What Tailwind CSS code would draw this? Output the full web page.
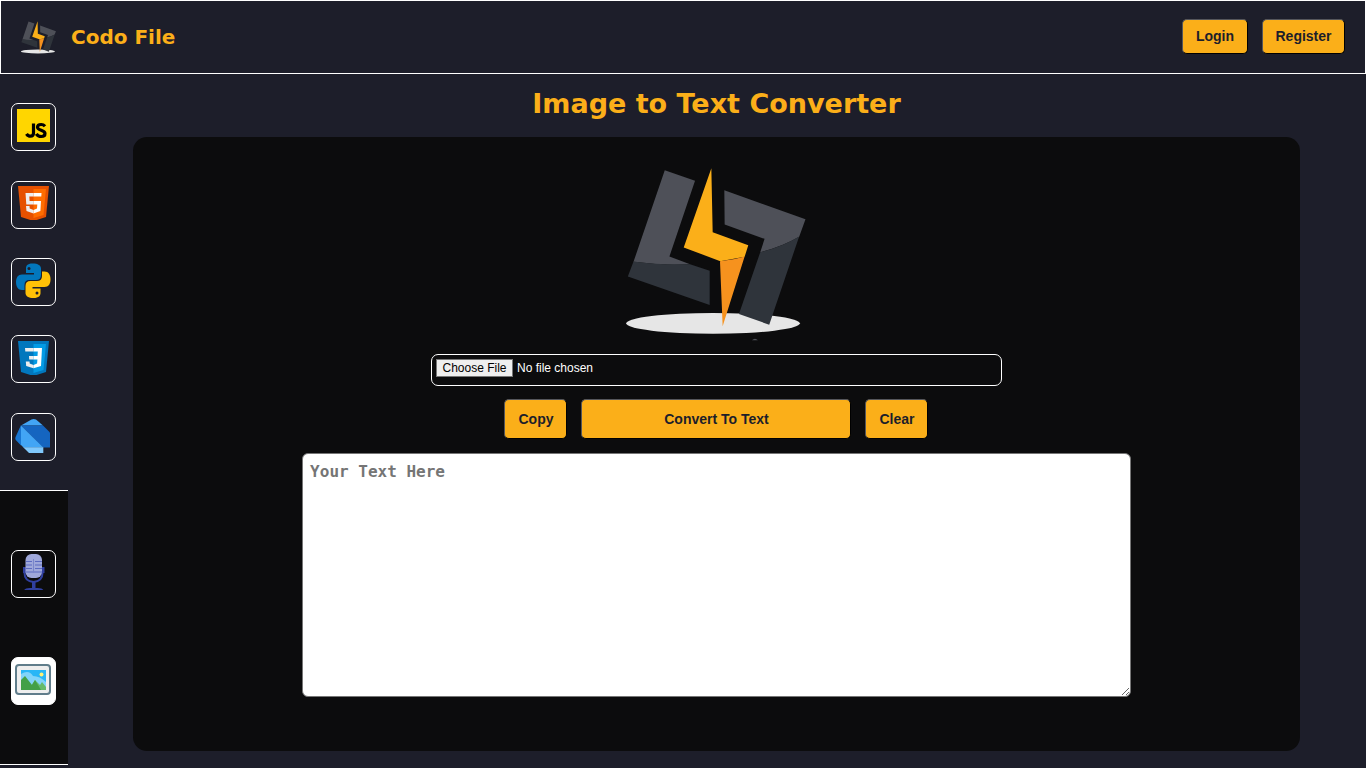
<!DOCTYPE html>
<html lang="en">
<head>
<meta charset="utf-8">
<meta name="viewport" content="width=device-width, initial-scale=1">
<title>Codo File - Image to Text Converter</title>
<script src="https://cdn.jsdelivr.net/npm/@tailwindcss/browser@4"></script>
</head>
<body class="flex min-h-screen flex-col bg-[#1d1e2a] font-['Liberation_Sans',Arial,sans-serif]">
<svg class="hidden" aria-hidden="true">
  <symbol id="logo" viewBox="48 54 540 520">
    <ellipse cx="309" cy="521" rx="261" ry="31" fill="#e6e6e6"/>
    <path fill="#4e5058" d="M164 61 255 92 178 320 240 343Q160 348 70 336Z"/>
    <path fill="#2f343b" d="M70 335Q150 346 240 343L299 363V466L53 380Z"/>
    <path fill="#4e5058" d="M343 121 587 208 568 261Q515 292 451 307L464 267 344 224Z"/>
    <path fill="#2f343b" d="M568 260 478 525 387 493 451 307Q515 292 568 260Z"/>
    <path fill="#fbaf19" d="M304 55 308 247 415 286 404 321 331 334 221 293Z"/>
    <path fill="#f6921e" d="M404 320 338 530 330 334Q370 331 404 320Z"/>
    <path fill="#4e5058" d="M426 572Q435 562 444 572Z"/>
  </symbol>
</svg>

<header class="flex h-[74px] shrink-0 items-center justify-between border border-white px-[20px]">
  <a href="#" class="flex items-center gap-[15px] font-['DejaVu_Sans',sans-serif] text-[20px] font-bold text-[#fbaf19]">
    <svg class="mt-[2px] h-[34px] w-[35px]" aria-hidden="true"><use href="#logo"/></svg>
    <span>Codo File</span>
  </a>
  <div class="flex gap-[14px] pb-[2px]">
    <button class="h-[35px] w-[66px] rounded-[5px] border border-t-[#55565b] border-l-[#55565b] border-r-black border-b-black bg-[#fbaf19] text-[14px] font-bold text-[#1d1e2a]">Login</button>
    <button class="h-[35px] w-[83px] rounded-[5px] border border-t-[#55565b] border-l-[#55565b] border-r-black border-b-black bg-[#fbaf19] text-[14px] font-bold text-[#1d1e2a]">Register</button>
  </div>
</header>

<div class="flex grow">
  <aside class="mb-[3px] flex w-[68px] shrink-0 flex-col">
    <nav aria-label="Languages" class="flex min-h-[417px] grow-[3] flex-col items-center justify-evenly border-b border-white pr-px">
      <a href="#" aria-label="JavaScript" class="flex h-[48px] w-[45px] rounded-[7px] border border-white pt-[3px] pl-[3px]">
        <svg class="size-[36px]" viewBox="0 0 36 36"><path fill="#ffd600" d="M2 2h33v33H2z"/><path fill="none" stroke="#000" stroke-width="3.200" d="M18.500 16.500v9.500q0 3.200-3 3.200-2.500 0-4-2.400M30 19.200Q28.500 17.500 26.200 17.500q-3.700 0-3.700 2.800c0 3.500 7.500 2.500 7.500 6.200q0 3-3.800 3-3.200 0-4.900-2.700"/></svg>
      </a>
      <a href="#" aria-label="HTML5" class="flex h-[48px] w-[45px] rounded-[7px] border border-white pt-[2px] pl-[3px]">
        <svg class="size-[36px]" viewBox="0 0 36 36"><path fill="#e65100" d="M3 2h31l-3 31-12.500 4L6 33z"/><path fill="#ff6d00" d="M18.500 5H31l-2.500 26-10 3z"/><path fill="#eee" d="M10.500 9h8v3.500h-4.200l.3 4.500h3.900v3.500h-7.200zM11 22h3.500l.2 2.500 3.800 1.500v3.500L11.500 27z"/><path fill="#fff" d="M18.500 9h8l-.2 3.500h-7.800zM18.500 17H26l-.6 10-6.900 2.500V26l3.500-1.500.3-4h-3.800z"/></svg>
      </a>
      <a href="#" aria-label="Python" class="flex h-[48px] w-[45px] rounded-[7px] border border-white pt-[3px] pl-[3px]">
        <svg class="size-[36px]" viewBox="0 0 36 36"><path fill="#0277bd" d="M17.500 1.500C12 1.500 11 4 11 6.500V11h8v1.500H7c-4 0-6 3-6 7.500s2 8 6 8h2.500V23q0-5 5-5H21q5 0 5-5V6.500c0-3-3-5-8.500-5z"/><path fill="#ffc107" d="M18.500 36c5.500 0 7-2.500 7-5v-4.500h-8V25h12c4 0 6-3 6-7.500s-2-8-6-8H27V14q0 5-5 5h-6.500q-5 0-5 5v7c0 3 3 5 8 5z"/><circle cx="14" cy="6.500" r="1.500" fill="#1d1e2a"/><circle cx="22" cy="31" r="1.500" fill="#1d1e2a"/></svg>
      </a>
      <a href="#" aria-label="CSS3" class="flex h-[48px] w-[45px] rounded-[7px] border border-white pt-[3px] pl-[3px]">
        <svg class="size-[36px]" viewBox="0 0 36 36"><path fill="#0277bd" d="M3 2h31l-3 31-12.500 4L6 33z"/><path fill="#039be5" d="M18.500 5H31l-2.500 26-10 3z"/><path fill="#eee" d="M10 9h8.500v3.500h-8.200zM14 17h4.500v3.500h-4.300zM10.800 22.500h3.700l.2 2 3.800 1.500v3.200L11.200 27z"/><path fill="#fff" d="M18.500 9H27l-1 18-7.500 2.200V26l3.600-1.500.3-4h-3.900V17h4l.3-4.500h-4.300z"/></svg>
      </a>
      <a href="#" aria-label="Dart" class="flex h-[48px] w-[45px] rounded-[7px] border border-white pt-[3px] pl-[3px]">
        <svg class="size-[36px]" viewBox="0 0 36 36"><path fill="#1976d2" d="M6 8v20.500L.8 23q-1-1.500 0-3.500z"/><path fill="#42a5f5" d="M6 8.500 16.500 2.500q2-1 4.500 0L28 8.500z"/><path fill="#1565c0" d="M6 8.500h22l7 7v15h-7z"/><path fill="#42a5f5" d="M6 8.500 28.300 30.500H8.500L6 28z"/><path fill="#80c8fc" d="M8.200 30.200h20.100v5.800H14z"/></svg>
      </a>
    </nav>
    <nav aria-label="Tools" class="flex min-h-[274px] grow-[2] flex-col items-center justify-evenly border-b border-white bg-[#0c0c0d] pr-px">
      <a href="#" aria-label="Speech to text" class="flex h-[48px] w-[45px] rounded-[7px] border border-white pt-[3px] pl-[3px]">
        <svg class="size-[36px]" viewBox="0 0 36 36"><path fill="none" stroke="#303f9f" stroke-width="2" d="M9.500 14v5q0 8 9 9 9-1 9-9v-5"/><path fill="#303f9f" d="M17 27h3.500v7H17zM9 37q0-3 6-3h7.500q6 0 6 3zM8 13h4v6H8zM25.500 13h4v6h-4z"/><rect x="10.500" y="0" width="16.500" height="24" rx="6" fill="#9fa8da"/><path stroke="#5c6bc0" stroke-width="1.200" d="M11 7.500h6m3 0h7M11 11h6m3 0h7M11 14.500h6m3 0h7M11 18h16"/><path stroke="#7986cb" d="M18.500 5v14"/></svg>
      </a>
      <a href="#" aria-label="Image to text" class="flex h-[48px] w-[45px] rounded-[7px] border border-white bg-white pt-[3px] pl-[3px]">
        <svg class="size-[36px]" viewBox="0 0 36 36"><rect x="1" y="4" width="34" height="29" rx="3" fill="#eee" stroke="#607d8b" stroke-width="2"/><path fill="#29b6f6" d="M6 9h25v20H6z"/><path fill="#81d4fa" d="M6 13q8-5 12 2 7 0 13 6v8H6z"/><circle cx="26.500" cy="13.500" r="2" fill="#fff176"/><path fill="#66bb6a" d="m14 28 6-9 5 5 2-3 4 5v3H14z"/><path fill="#43a047" d="M6 19l4-4 7 9 3-5 6 10H6z"/></svg>
      </a>
    </nav>
  </aside>

  <main class="flex grow flex-col items-center pt-[10px] pr-px pb-[17px]">
    <h1 class="mb-[13px] font-['DejaVu_Sans',sans-serif] text-[27px] leading-[40px] font-bold text-[#fbaf19]">Image to Text Converter</h1>
    <section class="flex w-9/10 grow flex-col items-center rounded-[14px] bg-[#0c0c0d] pt-[31px]">
      <svg class="h-[173px] w-[180px]" role="img" aria-label="Codo File logo"><use href="#logo"/></svg>
      <input type="file" aria-label="Choose an image" class="mt-[13px] h-[32px] w-[571px] max-w-full rounded-[7px] border border-white p-[4px] text-[12px] leading-[16px] text-white file:mr-[4px] file:h-[18px] file:w-[77px] file:rounded-none file:border file:border-solid file:border-[#767676] file:bg-[#efefef] file:p-0 file:font-normal file:text-black">
      <div class="mt-[13px] flex gap-[14px]">
        <button class="h-[40px] w-[63px] rounded-[5px] border border-t-[#55565b] border-l-[#55565b] border-r-black border-b-black bg-[#fbaf19] text-[14px] font-bold text-[#1d1e2a]">Copy</button>
        <button class="h-[40px] w-[270px] rounded-[5px] border border-t-[#55565b] border-l-[#55565b] border-r-black border-b-black bg-[#fbaf19] text-[14px] font-bold text-[#1d1e2a]">Convert To Text</button>
        <button class="h-[40px] w-[63px] rounded-[5px] border border-t-[#55565b] border-l-[#55565b] border-r-black border-b-black bg-[#fbaf19] text-[14px] font-bold text-[#1d1e2a]">Clear</button>
      </div>
      <textarea aria-label="Converted text" placeholder="Your Text Here" class="mt-[14px] h-[244px] w-[71%] resize rounded-[6px] border border-[#767676] bg-white px-[7px] py-[7px] font-['DejaVu_Sans_Mono',monospace] text-[16px] leading-[22px] font-bold text-black placeholder:text-[#757575]"></textarea>
    </section>
  </main>
</div>
</body>
</html>
